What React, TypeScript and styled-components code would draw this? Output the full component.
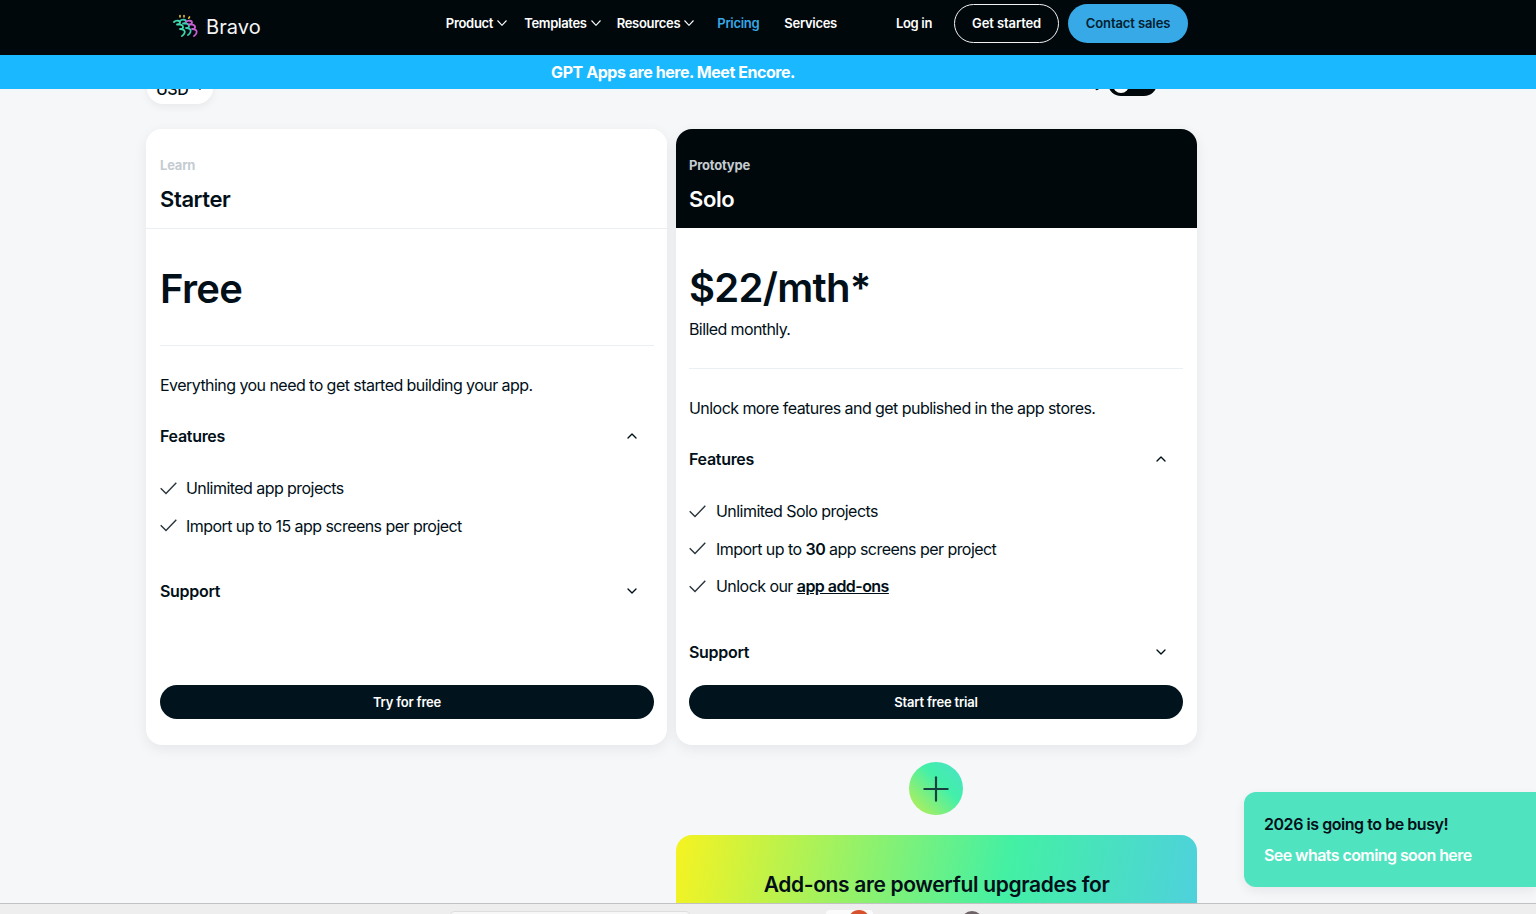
import React from "react";
import styled, { createGlobalStyle } from "styled-components";
import { ChevronDown, ChevronUp, Plus } from "lucide-react";

const GlobalStyle = createGlobalStyle`
  html, body {
    margin: 0;
    padding: 0;
    height: 100%;
    overflow: hidden;
    background: #f5f7f9;
  }
  * {
    box-sizing: border-box;
  }
  body {
    font-family: Inter, "Liberation Sans", sans-serif;
    color: #010f18;
  }
`;

const Page = styled.div`
  display: flex;
  flex-direction: column;
  height: 914px;
  overflow: hidden;
`;

const TopBar = styled.header`
  flex: none;
  display: flex;
  align-items: center;
  height: 55px;
  padding: 0 348px 9px 173px;
  background: #01080c;
`;

const Logo = styled.a`
  display: flex;
  align-items: center;
  gap: 7px;
  width: 273px;
  margin-top: 7px;
  color: #f4f4f4;
  font-size: 20px;
  letter-spacing: 0.1px;
`;

const NavLink = styled.a<{ $active?: boolean; $gap: number }>`
  display: flex;
  align-items: center;
  gap: 4px;
  margin-right: ${(p) => p.$gap}px;
  color: ${(p) => (p.$active ? "#37a9e6" : "#fff")};
  font-size: 13px;
  font-weight: 600;
  letter-spacing: -0.3px;
  white-space: nowrap;
`;

const PillLink = styled.a<{ $filled?: boolean }>`
  display: flex;
  align-items: center;
  justify-content: center;
  height: 39px;
  border-radius: 20px;
  font-size: 13px;
  font-weight: 600;
  letter-spacing: -0.1px;
  width: ${(p) => (p.$filled ? "120px" : "105px")};
  margin-right: ${(p) => (p.$filled ? 0 : "9px")};
  border: ${(p) => (p.$filled ? "none" : "1px solid #f2f2f2")};
  background: ${(p) => (p.$filled ? "#37a9e6" : "transparent")};
  color: ${(p) => (p.$filled ? "#01202f" : "#fff")};
`;

const Banner = styled.div`
  flex: none;
  display: flex;
  align-items: center;
  justify-content: center;
  height: 34px;
  padding-right: 190px;
  background: #1ab9ff;
  color: #fff;
  font-size: 16px;
  font-weight: 700;
  letter-spacing: -0.45px;
`;

const Main = styled.main`
  position: relative;
  flex: 1;
  min-height: 0;
  overflow: hidden;
  padding-left: 146px;
`;

const PlanControls = styled.div`
  display: flex;
  justify-content: space-between;
  align-items: flex-start;
  width: 1011px;
  height: 40px;
  margin-top: -25px;
  margin-bottom: 25px;
`;

const CurrencyPill = styled.div`
  display: flex;
  align-items: center;
  gap: 8px;
  width: 66px;
  height: 40px;
  margin-left: 1px;
  padding: 9px 9px 0;
  border-radius: 16px;
  background: #fff;
  box-shadow: 0 3px 8px rgba(1, 15, 24, 0.06);
  font-size: 16px;
  font-weight: 500;
  letter-spacing: -0.5px;
`;

const ToggleGroup = styled.div`
  display: flex;
  align-items: flex-start;
  gap: 5px;
`;

const ToggleLabel = styled.span`
  margin-top: 8px;
  font-size: 15px;
  line-height: 20px;
`;

const ToggleTrack = styled.div`
  width: 49px;
  height: 32px;
  padding: 13px 0 0 5px;
  border-radius: 13px;
  background: #01080c;
`;

const ToggleKnob = styled.div`
  width: 16px;
  height: 16px;
  border-radius: 50%;
  background: #fff;
`;

const PlanGrid = styled.div`
  display: grid;
  grid-template-columns: 521px 521px;
  column-gap: 9px;
  width: 1051px;
`;

const Card = styled.section`
  display: flex;
  flex-direction: column;
  height: 616px;
  border-radius: 16px;
  background: #fff;
  box-shadow: 0 4px 14px rgba(1, 15, 24, 0.07);
  overflow: hidden;
`;

const CardHead = styled.div<{ $dark?: boolean }>`
  flex: none;
  height: ${(p) => (p.$dark ? 99 : 100)}px;
  padding: 28px 0 0 ${(p) => (p.$dark ? 13 : 14)}px;
  background: ${(p) => (p.$dark ? "#01080c" : "#fff")};
  border-bottom: ${(p) => (p.$dark ? "none" : "1px solid #eceff1")};
`;

const Eyebrow = styled.div`
  height: 17px;
  font-size: 13px;
  line-height: 17px;
  font-weight: 700;
  letter-spacing: -0.2px;
  color: #c4ccd1;
`;

const PlanName = styled.h2<{ $dark?: boolean }>`
  margin: 12px 0 0;
  font-size: 22px;
  line-height: 26px;
  font-weight: 600;
  letter-spacing: -0.4px;
  color: ${(p) => (p.$dark ? "#fff" : "#010f18")};
`;

const CardBody = styled.div<{ $dark?: boolean }>`
  display: flex;
  flex: 1;
  flex-direction: column;
  padding: 0 ${(p) => (p.$dark ? "14px" : "13px")} 26px ${(p) => (p.$dark ? "13px" : "14px")};
`;

const PriceBlock = styled.div<{ $billed?: boolean }>`
  height: ${(p) => (p.$billed ? 141 : 117)}px;
  padding-top: 34px;
  border-bottom: 1px solid #eceff1;
`;

const Price = styled.div`
  font-size: 40px;
  line-height: 52px;
  font-weight: 600;
  letter-spacing: -0.7px;
`;

const Billed = styled.div`
  margin-top: 3px;
  font-size: 16px;
  line-height: 24px;
  letter-spacing: -0.6px;
`;

const Intro = styled.p`
  margin: 27px 0 0;
  font-size: 16px;
  line-height: 24px;
  letter-spacing: -0.55px;
`;

const SectionRow = styled.div<{ $space: number }>`
  display: flex;
  align-items: center;
  justify-content: space-between;
  height: 24px;
  margin-top: ${(p) => p.$space}px;
  padding-right: 14px;
  font-size: 16px;
  font-weight: 600;
  letter-spacing: -0.3px;
`;

const FeatureList = styled.ul`
  display: flex;
  flex-direction: column;
  gap: 13.5px;
  margin: 28px 0 0;
  padding: 0;
  list-style: none;
`;

const Feature = styled.li<{ $wide?: boolean }>`
  display: flex;
  align-items: center;
  gap: ${(p) => (p.$wide ? 10 : 9)}px;
  height: 24px;
  font-size: 16px;
  letter-spacing: -0.55px;

  b {
    font-weight: 600;
  }

  a {
    font-weight: 600;
    text-decoration: underline;
  }
`;

const Cta = styled.a`
  display: flex;
  align-items: center;
  justify-content: center;
  flex: none;
  height: 34px;
  margin-top: auto;
  border-radius: 17px;
  background: #01131d;
  color: #fff;
  font-size: 13px;
  font-weight: 600;
  letter-spacing: -0.2px;
`;

const AddonColumn = styled.div`
  display: flex;
  flex-direction: column;
  align-items: center;
  width: 521px;
  margin-left: 530px;
`;

const PlusBubble = styled.div`
  display: flex;
  align-items: center;
  justify-content: center;
  width: 54px;
  height: 53px;
  margin-top: 17px;
  margin-right: 2px;
  border-radius: 50%;
  background: linear-gradient(45deg, #c5ee4c 0%, #42f0a9 60%, #4ddfc8 100%);
  color: #17403f;
`;

const AddonCard = styled.div`
  width: 100%;
  height: 140px;
  margin-top: 20px;
  padding-top: 36px;
  border-radius: 16px 16px 0 0;
  background: linear-gradient(100deg, #f6f321 0%, #43f0a4 62%, #4fcfe0 100%);
  text-align: center;
  font-size: 21px;
  line-height: 28px;
  font-weight: 600;
  letter-spacing: -0.35px;
`;

const Toast = styled.aside`
  position: absolute;
  top: 703px;
  right: 0;
  width: 292px;
  height: 95px;
  padding: 20px 20px 0;
  border-radius: 12px 0 0 12px;
  background: #50e3bf;
  box-shadow: 0 4px 12px rgba(1, 15, 24, 0.07);
`;

const ToastTitle = styled.div`
  font-size: 16px;
  line-height: 24px;
  font-weight: 600;
  letter-spacing: -0.45px;
  color: #010f18;
`;

const ToastLink = styled.div`
  margin-top: 7px;
  font-size: 16px;
  line-height: 24px;
  font-weight: 600;
  letter-spacing: -0.57px;
  color: #fff;
`;

const BrowserEdge = styled.div`
  flex: none;
  display: flex;
  align-items: flex-start;
  height: 11px;
  overflow: hidden;
  padding-left: 450px;
  border-top: 1px solid #c2c2c2;
  background: #eeeeee;
`;

const EdgeField = styled.div`
  width: 240px;
  height: 10px;
  margin: 7px 136px 0 0;
  border-radius: 4px;
  background: #f7f7f7;
  border: 1px solid #dedede;
`;

const EdgeTab = styled.div`
  display: flex;
  justify-content: flex-end;
  width: 47px;
  height: 10px;
  margin: 6px 88px 0 0;
  padding-right: 3px;
  border-radius: 4px 4px 0 0;
  background: #fbfbfb;
`;

const EdgeDot = styled.div<{ $color: string }>`
  width: 22px;
  height: 22px;
  border-radius: 50%;
  background: ${(p) => p.$color};
`;

const EdgeAvatar = styled(EdgeDot)`
  margin-top: 7px;
`;

const NavChevron = () => (
  <svg width="10" height="6" viewBox="0 0 10 6" fill="none" stroke="#fff" strokeWidth="1.1">
    <path d="M.5.5 5 5.3 9.5.5" />
  </svg>
);

const CheckMark = () => (
  <svg width="17" height="13" viewBox="0 0 17 13" fill="none" stroke="#2a353b" strokeWidth="1.4">
    <path d="M.7 6.3 6 11.6 16.3.8" />
  </svg>
);

const squiggle =
  "M1 8C3 6 7 6.5 7 8.5 7 10 5 10.5 4 10.5 7 10 10.5 11 10 13.5 9.7 15 8 15.2 7 15 10 15 12.5 16.5 11.5 19 11 20.5 10 21.5 9 22";

const LogoMark = () => (
  <svg width="26" height="26" viewBox="0 0 26 26" fill="none" strokeLinecap="round" strokeLinejoin="round">
    <path d="M7 1.5v1.4M11 1.5v1.4M16.5 3l-.7 1.2" stroke="#e9c23c" strokeWidth="1.6" />
    <path d={squiggle} stroke="#3fd9ac" strokeWidth="1.8" />
    <path d={squiggle} transform="translate(6 -1)" stroke="#3cc9b4" strokeWidth="1.8" />
    <path d={squiggle} transform="translate(12 0)" stroke="#c95ed2" strokeWidth="1.8" />
  </svg>
);

interface PlanFeature {
  id: string;
  content: React.ReactNode;
}

interface Plan {
  eyebrow: string;
  name: string;
  price: string;
  billed?: string;
  intro: string;
  features: PlanFeature[];
  supportSpace: number;
  cta: string;
  dark?: boolean;
}

const plans: Plan[] = [
  {
    eyebrow: "Learn",
    name: "Starter",
    price: "Free",
    intro: "Everything you need to get started building your app.",
    features: [
      { id: "projects", content: "Unlimited app projects" },
      { id: "screens", content: "Import up to 15 app screens per project" },
    ],
    supportSpace: 41.5,
    cta: "Try for free",
  },
  {
    eyebrow: "Prototype",
    name: "Solo",
    price: "$22/mth*",
    billed: "Billed monthly.",
    intro: "Unlock more features and get published in the app stores.",
    features: [
      { id: "projects", content: "Unlimited Solo projects" },
      {
        id: "screens",
        content: (
          <span>
            Import up to <b>30</b> app screens per project
          </span>
        ),
      },
      {
        id: "addons",
        content: (
          <span>
            Unlock our <a>app add-ons</a>
          </span>
        ),
      },
    ],
    supportSpace: 42,
    cta: "Start free trial",
    dark: true,
  },
];

const App: React.FC = () => {
  return (
    <Page>
      <GlobalStyle />
      <TopBar>
        <Logo>
          <LogoMark />
          Bravo
        </Logo>
        <NavLink $gap={17}>
          Product <NavChevron />
        </NavLink>
        <NavLink $gap={16}>
          Templates <NavChevron />
        </NavLink>
        <NavLink $gap={23}>
          Resources <NavChevron />
        </NavLink>
        <NavLink $active $gap={25}>
          Pricing
        </NavLink>
        <NavLink $gap={59}>Services</NavLink>
        <NavLink $gap={22}>Log in</NavLink>
        <PillLink>Get started</PillLink>
        <PillLink $filled>Contact sales</PillLink>
      </TopBar>
      <Banner>GPT Apps are here. Meet Encore.</Banner>
      <Main>
        <PlanControls>
          <CurrencyPill>
            USD <ChevronDown size={12} />
          </CurrencyPill>
          <ToggleGroup>
            <ToggleLabel>Monthly</ToggleLabel>
            <ToggleTrack>
              <ToggleKnob />
            </ToggleTrack>
          </ToggleGroup>
        </PlanControls>
        <PlanGrid>
          {plans.map((plan) => (
            <Card key={plan.name}>
              <CardHead $dark={plan.dark}>
                <Eyebrow>{plan.eyebrow}</Eyebrow>
                <PlanName $dark={plan.dark}>{plan.name}</PlanName>
              </CardHead>
              <CardBody $dark={plan.dark}>
                <PriceBlock $billed={!!plan.billed}>
                  <Price>{plan.price}</Price>
                  {plan.billed && <Billed>{plan.billed}</Billed>}
                </PriceBlock>
                <Intro>{plan.intro}</Intro>
                <SectionRow $space={27}>
                  Features <ChevronUp size={16} strokeWidth={2} />
                </SectionRow>
                <FeatureList>
                  {plan.features.map((feature) => (
                    <Feature key={feature.id} $wide={plan.dark}>
                      <CheckMark />
                      {feature.content}
                    </Feature>
                  ))}
                </FeatureList>
                <SectionRow $space={plan.supportSpace}>
                  Support <ChevronDown size={16} strokeWidth={2} />
                </SectionRow>
                <Cta>{plan.cta}</Cta>
              </CardBody>
            </Card>
          ))}
        </PlanGrid>
        <AddonColumn>
          <PlusBubble>
            <Plus size={40} strokeWidth={1.3} />
          </PlusBubble>
          <AddonCard>Add-ons are powerful upgrades for</AddonCard>
        </AddonColumn>
        <Toast>
          <ToastTitle>2026 is going to be busy!</ToastTitle>
          <ToastLink>See whats coming soon here</ToastLink>
        </Toast>
      </Main>
      <BrowserEdge>
        <EdgeField />
        <EdgeTab>
          <EdgeDot $color="#d9502c" />
        </EdgeTab>
        <EdgeAvatar $color="#6d6265" />
      </BrowserEdge>
    </Page>
  );
};

export default App;
